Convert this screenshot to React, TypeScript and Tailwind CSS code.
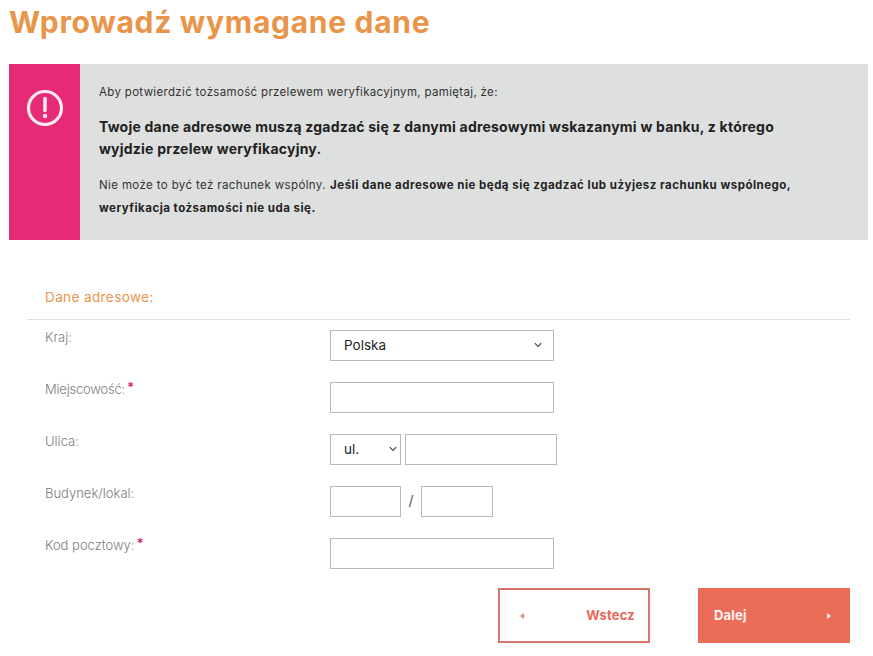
import React from "react";

function Row({ label, req, children, track = "" }: { label: string; req?: boolean; children: React.ReactNode; track?: string }) {
  return (
    <div className="flex h-[31px] items-start">
      <div className={`-mt-[1px] w-[303px] pl-[18px] text-[13px] leading-[16px] font-light text-[#7d7d7d] ${track}`}>
        {label}
        {req && <span className="relative -top-[2px] ml-[2px] font-bold text-[#d6336c]">*</span>}
      </div>
      {children}
    </div>
  );
}

const box = "h-[31px] border border-[#b8b8b8] bg-white";

function Chevron({ className }: { className: string }) {
  return (
    <svg className={`pointer-events-none absolute top-[12px] ${className}`} width="8" height="6" viewBox="0 0 8 6" fill="none">
      <path d="M0.8 1.2L4 4.4L7.2 1.2" stroke="#444" strokeWidth="1.2" />
    </svg>
  );
}

export default function App() {
  return (
    <div className="w-[873px] h-[656px] overflow-hidden bg-white font-['Inter',sans-serif] text-[#222]">
      <h1 className="pl-[9px] pt-[3px] h-[64px] text-[30px] leading-[38px] font-bold text-[#e8954a] tracking-[0.7px]">
        Wprowadź wymagane dane
      </h1>
      <div className="ml-[9px] flex h-[176px] w-[859px] bg-[#dedfdf]">
        <div className="flex w-[71px] shrink-0 justify-center bg-[#e72a77] pt-[25px]">
          <svg width="38" height="38" viewBox="0 0 38 38" fill="none">
            <circle cx="19" cy="19" r="16.5" stroke="#fbe9f0" strokeWidth="3.2" />
            <path d="M19 9.5v12" stroke="#fbe9f0" strokeWidth="3.6" strokeLinecap="round" />
            <circle cx="19" cy="27" r="2.2" fill="#fbe9f0" />
          </svg>
        </div>
        <div className="pl-[19px] pr-[40px] pt-[20px] whitespace-nowrap">
          <p className="text-[11.5px] leading-[16px] tracking-[0.33px] text-[#333]">
            Aby potwierdzić tożsamość przelewem weryfikacyjnym, pamiętaj, że:
          </p>
          <p className="mt-[16px] text-[14px] leading-[22px] tracking-[0.22px] font-bold text-[#222]">
            Twoje dane adresowe muszą zgadzać się z danymi adresowymi wskazanymi w banku, z którego
            <br />
            wyjdzie przelew weryfikacyjny.
          </p>
          <p className="mt-[14px] text-[11.5px] leading-[23px] tracking-[0.38px] text-[#333]">
            Nie może to być też rachunek wspólny.
            <b className="ml-[1px] font-bold tracking-[0.49px] text-[#222]"> Jeśli dane adresowe nie będą się zgadzać lub użyjesz rachunku wspólnego,</b>
            <br />
            <b className="font-bold tracking-[0.48px] text-[#222]">weryfikacja tożsamości nie uda się.</b>
          </p>
        </div>
      </div>

      <div className="ml-[27px] mt-[49px] w-[823px]">
        <div className="h-[31px] border-b border-[#e0e0e0] pl-[18px] text-[13.5px] leading-[17px] tracking-[0.4px] text-[#e8954a]">
          Dane adresowe:
        </div>
        <div className="mt-[10px] flex flex-col gap-[21px]">
          <Row label="Kraj:">
            <div className="relative">
              <select className={`${box} block w-[224px] appearance-none pl-[13px] text-[13.5px] text-[#222]`} defaultValue="Polska">
                <option>Polska</option>
              </select>
              <Chevron className="right-[12px]" />
            </div>
          </Row>
          <Row label="Miejscowość:" req track="tracking-[-0.2px]">
            <input className={`${box} w-[224px]`} />
          </Row>
          <Row label="Ulica:">
            <div className="relative">
              <select className={`${box} block w-[71px] appearance-none pl-[13px] text-[13.5px] text-[#222]`} defaultValue="ul.">
                <option>ul.</option>
              </select>
              <Chevron className="right-[4px]" />
            </div>
            <input className={`${box} ml-[4px] w-[152px]`} />
          </Row>
          <Row label="Budynek/lokal:">
            <input className={`${box} w-[71px]`} />
            <span className="w-[20px] text-center text-[14px] leading-[29px] text-[#555]">/</span>
            <input className={`${box} w-[72px]`} />
          </Row>
          <Row label="Kod pocztowy:" req>
            <input className={`${box} w-[224px]`} />
          </Row>
        </div>
        <div className="mt-[19px] flex justify-end gap-[48px]">
          <button className="flex h-[55px] w-[152px] items-center justify-between border-2 border-[#d9766a] bg-white pl-[20px] pr-[13px] text-[13px] tracking-[0.2px] font-bold text-[#e9695a]">
            <svg width="4" height="6" viewBox="0 0 4 6"><path d="M4 0v6L0 3z" fill="#dd8a70" /></svg>
            Wstecz
          </button>
          <button className="flex h-[55px] w-[152px] items-center justify-between bg-[#ec6c5a] pl-[16px] pr-[19px] text-[13px] tracking-[0.2px] font-bold text-[#fdf3ef]">
            Dalej
            <svg width="4" height="6" viewBox="0 0 4 6"><path d="M0 0v6l4-3z" fill="#fdf3ef" /></svg>
          </button>
        </div>
      </div>
    </div>
  );
}
